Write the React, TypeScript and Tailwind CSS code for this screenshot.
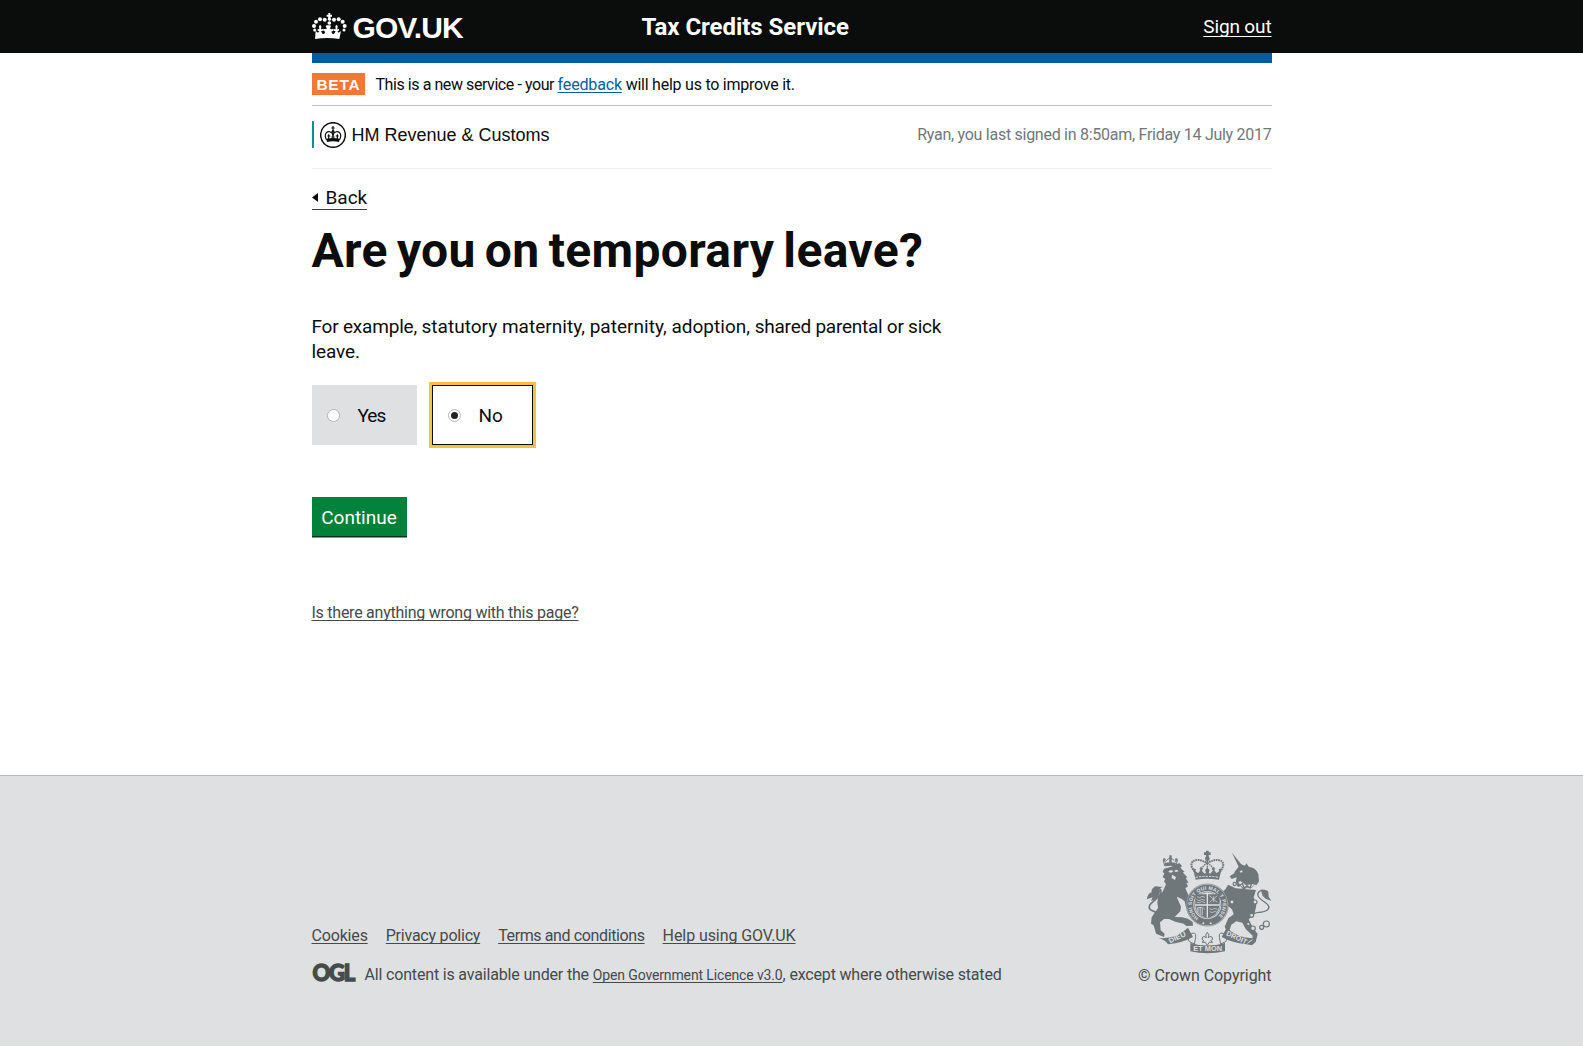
import React from "react";

function CrownMark() {
  return (
    <svg className="block h-[27px] w-[35px] fill-white" viewBox="36 38 105 81">
      <path d="M85 38h6v5h5v6h-5l3 9-5 4-6-4 2-9h-5v-6h5z" />
      <circle cx="88" cy="68" r="5.5" />
      <circle cx="74" cy="58" r="6" />
      <circle cx="60" cy="57" r="6" />
      <circle cx="48" cy="64" r="6" />
      <circle cx="42" cy="77" r="6" />
      <circle cx="44" cy="89" r="4.5" />
      <circle cx="102" cy="58" r="6" />
      <circle cx="116" cy="57" r="6" />
      <circle cx="128" cy="64" r="6" />
      <circle cx="134" cy="77" r="6" />
      <circle cx="132" cy="89" r="4.5" />
      <path d="M47 92l7 5 4-4-5-2v-5l5 1-1-9 3-5 4 5-1 9 6-1v5l-6 2 5 8 5-1 3-6-6-3v-6l6 2 5-3-4-5 2-4h12l2 4-4 5 5 3 6-2v6l-6 3 3 6 5 1 5-8-6-2v-5l6 1-1-9 4-5 3 5-1 9 5-1v5l-5 2 4 4 7-5-5 24q-37-6-73 0z" />
    </svg>
  );
}

function DepartmentMark() {
  return (
    <svg className="block size-[26px]" viewBox="0 0 78 78">
      <circle cx="39" cy="39" r="37" fill="#fff" stroke="#0b0c0c" strokeWidth="4.5" />
      <g fill="none" stroke="#0b0c0c" strokeWidth="3.5">
        <path d="M20 54C10 37 20 27 29 29c6 1 9 6 10 12 1-6 4-11 10-12 9-2 19 8 9 25" />
        <path d="M39 12v13M34 18h10M39 28v23M26 37v14M52 37v14M22 42h9M47 42h9M34 45h10" />
      </g>
      <circle cx="39" cy="28" r="4" fill="#0b0c0c" />
      <path d="M19 50q20-4 40 0l-2 10q-18-4-36 0z" fill="#0b0c0c" />
    </svg>
  );
}

function RoyalArms() {
  return (
    <svg className="block h-[104px] w-[126px]" viewBox="80 30 378 312" fill="#6f777b">
      {/* lion */}
      <path d="M136 78l-4-17 8 6M170 78l4-17-8 6M141 62q12-14 24 0" fill="none" stroke="#6f777b" strokeWidth="3" />
      <path d="M136 70q17-6 34 0l-2 9q-15-4-30 0zM150 46h7v9h-7zM150 55h7v16h-7z" />
      <circle cx="135" cy="59" r="4" />
      <circle cx="171" cy="59" r="4" />
      <path d="M134 86l22-6 24-11 8 9-5 5 13 13-6 1 14 15-5 2 9 14-7 0 5 11-8 6 5 11 12 26 3 12-10 18-8-10-4-18-10-8-14-6 13 30-2 14-17 17 22 1 18 4 14 10 1 11-20 1-8-7-25-6-19-8-15 0-12 10 2 24 12 10-2 10-24-10-7-25-8-5 2-19 19-28-2-18 3-17 13-14 10-22-6-9 4-8-8-4 5-12-5-4z" />
      <path d="M147 94l8-4 7 3-5 5-8-1zM164 92l9-3 5 5-9 2zM158 104l12 7-3 9-10-6z" fill="#dee0e2" />
      <path d="M114 220c-9-9-30-7-23-24 6-13 37-25 34-43-2-10-18-10-20-2" fill="none" stroke="#6f777b" strokeWidth="5" />
      <path d="M82 178q4-19 15-21-2-10 10-18l24 2-14 5 6 7q-5 24-28 30l5-11z" />
      {/* unicorn */}
      <path d="M338 38l32 40-10 7z" />
      <path d="M346 95l18-22 13 4 4-7 8 11q19 0 28 21l2 22-8 12-10-5-19 12-12 5-6-10-8 3-7-13 3-16-15 5-6-8 14-9z" />
      <path d="M326 134l23 11 34 3 27 2-7 22 8 24-6 28-17 14 11 22 16 22-6 24-11 10-16-3 17-12 1-14-21-20-10-19-18-4-15 10-7 22-7-3-6-13 11-25 16-12-5-15-19-16-16-15-6 8-11-20 15 5-10-20 18 6 10-9z" />
      <path d="M352 128l20 16 26-2 10-15-13 5-16 2-16-12z" fill="#dee0e2" stroke="#6f777b" strokeWidth="2" />
      <path d="M352 123l9 13 8-5 6 14 8-8 9 7 5-15 10 1" fill="none" stroke="#6f777b" strokeWidth="4" />
      <path d="M361 94l7-3 2 5-6 2z" fill="#dee0e2" />
      <path d="M400 225c4-12 29-3 45-16 16-17-24-25-29-42-3-13 14-21 23-12" fill="none" stroke="#6f777b" strokeWidth="4" />
      <path d="M427 151q13-5 20 4l1 15 8 12-16-5-10-9-5-17z" />
      <g fill="#dee0e2" stroke="#6f777b" strokeWidth="3.5">
        <circle cx="441" cy="252" r="9" />
        <circle cx="427" cy="262" r="6" />
        <circle cx="401" cy="265" r="7" />
        <circle cx="387" cy="252" r="5" />
        <circle cx="397" cy="226" r="6" />
        <circle cx="407" cy="186" r="6" />
        <circle cx="338" cy="186" r="6" />
        <circle cx="346" cy="132" r="5" />
      </g>
      {/* crown */}
      <g fill="none" stroke="#6f777b">
        <path d="M236 104C210 84 211 62 232 60c16-2 25 9 32 6 7 3 16-8 32-6 21 2 22 24-4 44" strokeWidth="6" strokeDasharray="5 2" />
        <path d="M264 50v55M264 68c-14 10-21 20-20 35M264 68c14 10 21 20 20 35" strokeWidth="4" strokeDasharray="5 2" />
      </g>
      <path d="M260 32h8v5h6v8h-6v6h-8v-6h-6v-8h6z" />
      <circle cx="264" cy="56" r="7" />
      <path d="M221 85l9 3-2 6 8 6 8-10-4-3 5-7 6 7-4 4 8 10 5-3-3-8 7-7 7 7-3 8 5 3 8-10-4-4 6-7 5 7-4 3 8 10 8-6-2-6 9-3-8 34q-37-5-70 0z" />
      <path d="M229 112q35-6 70 0" stroke="#dee0e2" strokeWidth="3" strokeDasharray="7 3" fill="none" />
      {/* garter and shield */}
      <circle cx="264" cy="195" r="63" fill="#dee0e2" stroke="#6f777b" strokeWidth="2" />
      <circle cx="264" cy="195" r="51.5" fill="none" stroke="#6f777b" strokeWidth="19" />
      <defs>
        <path id="motto" d="M238 234A46.500 46.500 0 1 1 290 234" />
      </defs>
      <text fill="#dee0e2" className="font-['Liberation_Sans',sans-serif] text-[15px] font-bold">
        <textPath href="#motto" textLength="228">HONI SOIT QUI MAL Y PENSE</textPath>
      </text>
      <circle cx="264" cy="195" r="39" fill="#dee0e2" stroke="#6f777b" strokeWidth="2" />
      <path d="M231 163h31v30h-34q-2-16 3-30zM266 163h31q5 14 3 30h-34zM228 197h34v37q-31-9-34-37zM266 197h34q-3 28-34 37z" />
      <g fill="none" stroke="#dee0e2" strokeWidth="2">
        <path d="M233 170l8 3 7-4 9 3M232 179l8 3 7-4 10 3M232 187l9 1 6-3 10 3" />
        <path d="M270 167l24 20M294 167l-23 20M283 169v17" />
        <path d="M234 202v14M239 201v20M244 201v24M249 204v22M235 204q14-5 21 4M270 206l8 3 7-4 10 3M271 215l8 3 7-4 7 3" />
      </g>
      <circle cx="252" cy="250" r="3" fill="#dee0e2" />
      <circle cx="274" cy="250" r="3" fill="#dee0e2" />
      {/* motto ribbon */}
      <g fill="#dee0e2" stroke="#6f777b" strokeWidth="3">
        <path d="M213 283q18-11 16 9l-4 20-15-7-8-16z" />
        <path d="M316 283q-18-11-16 9l4 20 15-7 8-16z" />
      </g>
      <path d="M118 294q51 4 88-31l15 28q-30 17-75 22-6-12-28-19zM410 294q-51 4-88-31l-15 28q30 17 75 22 6-12 28-19zM213 309q51 15 104 0v25q-53 12-104 0z" />
      <path d="M264 277q8 7 3 17 4-8 11-3 6 8-4 11l6 5-10 0-6 9-6-9h-10l6-5q-10-3-4-11 7-5 11 3-5-10 3-17z" fill="#dee0e2" stroke="#6f777b" strokeWidth="3" />
      <g fill="#dee0e2" className="font-['Liberation_Sans',sans-serif] text-[21px] font-bold">
        <text x="222" y="334" textLength="86" lengthAdjust="spacingAndGlyphs">ET MON</text>
        <text transform="translate(152 310) rotate(-25)" textLength="54" lengthAdjust="spacingAndGlyphs">DIEU</text>
        <text transform="translate(319 285) rotate(25)" textLength="66" lengthAdjust="spacingAndGlyphs">DROIT</text>
      </g>
    </svg>
  );
}

function Radio({ checked = false }: { checked?: boolean }) {
  return (
    <span className="flex size-[13px] shrink-0 items-center justify-center rounded-full border border-[#b4b4b4] bg-white">
      {checked && <span className="size-[7px] rounded-full bg-[#222]" />}
    </span>
  );
}

function Header() {
  return (
    <header className="h-[53px] bg-[#0b0c0c] text-white">
      <div className="mx-auto flex h-full w-[960px] items-center">
        <a href="#" className="flex w-[330px] items-center gap-[6px]">
          <CrownMark />
          <span className="pt-[2px] font-['Liberation_Sans',sans-serif] text-[30px] leading-[30px] font-bold tracking-[-0.9px]">GOV.UK</span>
        </a>
        <span className="text-[24px] leading-[30px] font-bold tracking-[-0.05px] whitespace-nowrap">Tax Credits Service</span>
        <a href="#" className="ml-auto text-[19px] leading-[24px] tracking-[-0.13px] underline underline-offset-[3px]">Sign out</a>
      </div>
    </header>
  );
}

function Footer() {
  return (
    <footer className="h-[271px] border-t border-[#b5bbbf] bg-[#dee0e2] text-[16px] text-[#454a4c]">
      <div className="mx-auto flex w-[960px] justify-between pt-[74px]">
        <div className="pt-[76px]">
          <nav className="flex gap-[18px] leading-[20px]">
            <a href="#" className="tracking-[-0.17px] underline underline-offset-2">Cookies</a>
            <a href="#" className="tracking-[-0.22px] underline underline-offset-2">Privacy policy</a>
            <a href="#" className="tracking-[-0.38px] underline underline-offset-2">Terms and conditions</a>
            <a href="#" className="tracking-[-0.08px] underline underline-offset-2">Help using GOV.UK</a>
          </nav>
          <div className="mt-[17px] flex items-start leading-[20px] tracking-[-0.17px]">
            <span className="w-[53px] pl-px font-['Lato',sans-serif] text-[22px] font-black tracking-[-1.3px] [-webkit-text-stroke:1.3px_#454a4c]">OGL</span>
            <p className="pt-[2px] whitespace-nowrap">
              All content is available under the{" "}
              <a href="#" className="text-[14px] tracking-[-0.13px] underline underline-offset-2">Open Government Licence v3.0</a>
              , except where otherwise stated
            </p>
          </div>
        </div>
        <div className="flex flex-col items-end">
          <RoyalArms />
          <a href="#" className="mt-[12px] leading-[20px] tracking-[-0.06px]">© Crown Copyright</a>
        </div>
      </div>
    </footer>
  );
}

export default function App() {
  return (
    <div className="min-h-[1047px] bg-white font-['Roboto',sans-serif] text-[#0b0c0c] [text-decoration-skip-ink:none]">
      <Header />
      <main className="mx-auto h-[722px] w-[960px]">
        <div className="h-[10px] bg-[#005ea5]" />
        <div className="flex h-[43px] items-center border-b border-[#bfc1c3] text-[16px]">
          <strong className="mr-[11px] flex h-[22px] w-[53px] items-center justify-center bg-[#f47738] pt-[2px] pl-px font-['Liberation_Sans',sans-serif] text-[15.5px] tracking-[0.8px] text-white">BETA</strong>
          <p className="pt-[2px] tracking-[-0.43px]">
            This is a new service - your{" "}
            <a href="#" className="tracking-[-0.15px] text-[#005ea5] underline underline-offset-2">feedback</a>
            <span className="tracking-[-0.24px]"> will help us to improve it.</span>
          </p>
        </div>
        <div className="flex h-[63px] items-start justify-between border-b border-[#efefef] pt-[15px]">
          <div className="flex h-[27px] items-center border-l-2 border-[#009390] pl-[6px]">
            <DepartmentMark />
            <span className="ml-[6px] font-['Liberation_Sans',sans-serif] text-[18px] leading-[20px]">HM Revenue &amp; Customs</span>
          </div>
          <p className="leading-[27px] tracking-[-0.27px] text-[#6f777b]">Ryan, you last signed in 8:50am, Friday 14 July 2017</p>
        </div>
        <a href="#" className="mt-[16px] flex h-[25px] w-[55px] items-center border-b border-[#3c3d3d] pt-[2px] text-[19px]">
          <svg className="mr-[8px] mb-[2px] h-[9px] w-[6px] shrink-0" viewBox="0 0 6 9"><path d="M0 4.500L6 0v9z" fill="#0b0c0c" /></svg>
          Back
        </a>
        <h1 className="mt-[16px] text-[48px] leading-[50px] font-bold tracking-[0.35px] [word-spacing:-3.200px] whitespace-nowrap">Are you on temporary leave?</h1>
        <p className="mt-[38px] w-[640px] text-[19px] leading-[25px] tracking-[-0.115px]">
          <span className="tracking-[-0.2px]">For example, </span>
          <span className="tracking-[0.02px]">statutory maternity, paternity, adoption, </span>
          <span className="tracking-[-0.25px]">shared parental or sick</span>
          <br />leave.
        </p>
        <div className="mt-[21px] flex gap-[15px] text-[19px]">
          <label className="flex h-[60px] w-[105px] items-center gap-[18px] bg-[#dee0e2] pl-[15px]">
            <Radio /><span className="pt-[2px] tracking-[-1px]">Yes</span>
          </label>
          <label className="flex h-[60px] w-[101px] items-center gap-[18px] border border-[#0b0c0c] bg-white pl-[15px] outline-3 outline-[#ffbf47]">
            <Radio checked /><span className="pt-[2px]">No</span>
          </label>
        </div>
        <button className="mt-[52px] block h-[39px] w-[95px] bg-[#00823b] pt-[3px] text-[19px] text-white shadow-[0_1.500px_0_#003618]">Continue</button>
        <a href="#" className="mt-[67px] inline-block leading-[20px] tracking-[-0.25px] text-[#454a4c] underline underline-offset-2">Is there anything wrong with this page?</a>
      </main>
      <Footer />
    </div>
  );
}
